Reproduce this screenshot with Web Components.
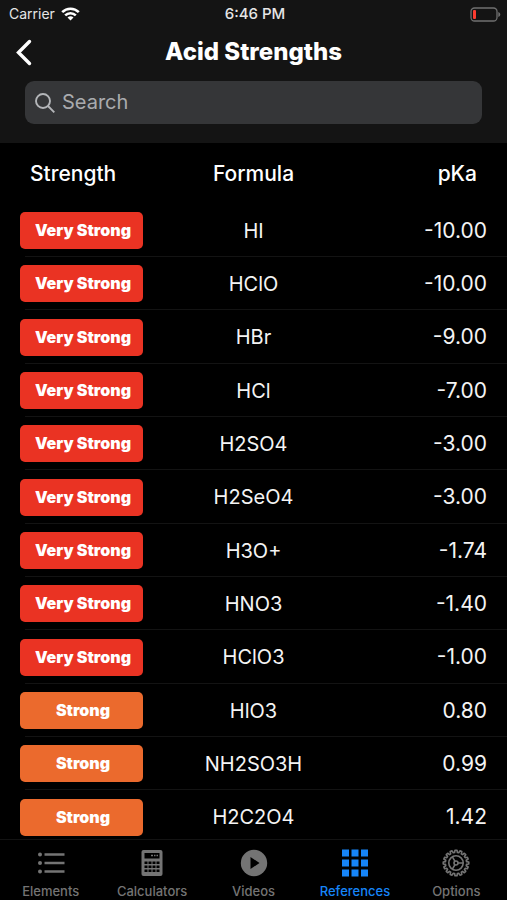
<!DOCTYPE html>
<html lang="en">
<head>
<meta charset="utf-8">
<meta name="viewport" content="width=device-width, initial-scale=1">
<title>Acid Strengths</title>
<style>
  html, body { height: 100%; }
  body {
    margin: 0;
    background: #000;
    color: #fff;
    font-family: Inter, "Liberation Sans", sans-serif;
  }
</style>
</head>
<body>
<acid-app></acid-app>

<script>
const define = (name, html, setup) => {
  const template = document.createElement('template');
  template.innerHTML = html;
  customElements.define(name, class extends HTMLElement {
    constructor() {
      super();
      this.attachShadow({ mode: 'open' }).append(template.content.cloneNode(true));
    }
    connectedCallback() {
      if (setup) setup(this, this.shadowRoot);
    }
  });
};

define('status-bar', `
  <style>
    :host { display: grid; grid-template-columns: 1fr auto 1fr; align-items: center; height: 28px; padding: 0 6px 0 9px; color: #e6e6e6; font-size: 14px; line-height: 20px; }
    .left { display: flex; align-items: center; gap: 6px; }
    .time { font-size: 15px; font-weight: 500; }
    .battery { justify-self: end; }
    svg { display: block; }
  </style>
  <div class="left"><span>Carrier</span>
    <svg width="19" height="14" viewBox="0 0 19 14" fill="none" stroke="#fff" stroke-width="2.6" aria-label="Wi-Fi">
      <path d="M1.2 5.2a11.8 11.8 0 0 1 16.6 0M4.2 8.4a7.5 7.5 0 0 1 10.6 0"/>
      <path d="M9.5 13.6 6.5 10.6a4.3 4.3 0 0 1 6 0z" fill="#fff" stroke="none"/>
    </svg>
  </div>
  <span class="time">6:46 PM</span>
  <svg class="battery" width="31" height="15" viewBox="0 0 31 15" aria-label="Battery low">
    <rect x="1" y="1" width="26" height="13" rx="3.5" fill="none" stroke="#707070" stroke-width="1.3"/>
    <rect x="3" y="3" width="3" height="9" rx="1" fill="#fb3b30"/>
    <path d="M28.3 5v5c1.2-.4 2-1.3 2-2.5s-.8-2.1-2-2.5z" fill="#707070"/>
  </svg>
`);

define('nav-bar', `
  <style>
    :host { display: grid; grid-template-columns: 48px 1fr 48px; align-items: center; height: 48px; }
    button { display: grid; place-items: center; width: 48px; height: 48px; padding: 0; border: 0; background: none; }
    h1 { margin: 0; text-align: center; font-size: 24px; line-height: 32px; font-weight: 800; }
  </style>
  <button type="button" aria-label="Back">
    <svg width="18" height="28" viewBox="0 0 18 28" fill="none" stroke="#fff" stroke-width="3.4" stroke-linecap="round"><path d="M14.5 3.5 3.5 14.5l11 11"/></svg>
  </button>
  <h1><slot></slot></h1>
`);

define('search-field', `
  <style>
    :host { display: block; padding: 5px 25px 19px; }
    label { display: flex; align-items: center; gap: 7px; height: 43px; padding: 0 10px; border-radius: 9px; background: #353638; }
    input { flex: 1; min-width: 0; height: 32px; padding: 0 0 2px; border: 0; outline: 0; background: none; color: #fff; font: inherit; font-size: 20px; appearance: none; }
    input::placeholder { color: #a9abae; opacity: 1; }
    svg { display: block; flex: none; }
  </style>
  <label>
    <svg width="20" height="20" viewBox="0 0 20 20" fill="none" stroke="#b4b6b9" stroke-width="1.9" aria-hidden="true"><circle cx="8" cy="8" r="7"/><path d="m13 13 6.3 6.3"/></svg>
    <input type="search" placeholder="Search" aria-label="Search">
  </label>
`);

define('strength-badge', `
  <style>
    :host { display: block; box-sizing: border-box; width: 123px; height: 37px; padding-left: 3px; border-radius: 5px; background: #ea3323; color: #fff; text-align: center; font-size: 16px; line-height: 37px; font-weight: 900; white-space: nowrap; }
    :host([level="strong"]) { background: #eb6a2d; }
  </style>
  <slot></slot>
`);

const acids = [
  ['Very Strong', 'HI', '-10.00'],
  ['Very Strong', 'HClO', '-10.00'],
  ['Very Strong', 'HBr', '-9.00'],
  ['Very Strong', 'HCl', '-7.00'],
  ['Very Strong', 'H2SO4', '-3.00'],
  ['Very Strong', 'H2SeO4', '-3.00'],
  ['Very Strong', 'H3O+', '-1.74'],
  ['Very Strong', 'HNO3', '-1.40'],
  ['Very Strong', 'HClO3', '-1.00'],
  ['Strong', 'HlO3', '0.80'],
  ['Strong', 'NH2SO3H', '0.99'],
  ['Strong', 'H2C2O4', '1.42']
];

define('acid-table', `
  <style>
    :host { display: block; overflow-y: auto; scrollbar-width: none; }
    table { width: 100%; table-layout: fixed; border-collapse: collapse; font-size: 21px; line-height: 28px; }
    th, td { padding: 0; font-weight: 500; }
    td { font-weight: 400; color: #f4f4f4; }
    td.formula { font-size: 20px; }
    thead tr { height: 61px; }
    tbody tr { height: 53px; background: linear-gradient(#131313, #131313) 25px 100% / 100% 1px no-repeat; }
    tbody tr:nth-child(3n) { height: 54px; }
    .strength { width: 30%; text-align: left; padding-left: 20px; box-sizing: border-box; }
    th.strength { padding-left: 30px; }
    .formula { text-align: center; }
    .pka { width: 30%; text-align: right; padding-right: 20px; box-sizing: border-box; }
    th.pka { padding-right: 30px; }
  </style>
  <table>
    <thead><tr><th class="strength" scope="col">Strength</th><th class="formula" scope="col">Formula</th><th class="pka" scope="col">pKa</th></tr></thead>
    <tbody></tbody>
  </table>
`, (host, root) => {
  root.querySelector('tbody').innerHTML = acids.map(([strength, formula, pka]) => `
    <tr><td class="strength"><strength-badge level="${strength.toLowerCase().replace(' ', '-')}">${strength}</strength-badge></td><td class="formula">${formula}</td><td class="pka">${pka}</td></tr>`).join('');
});

define('tab-item', `
  <style>
    :host { display: block; flex: 1; color: #747474; }
    :host([active]) { color: #1685f8; }
    a { display: flex; flex-direction: column; align-items: center; gap: 5px; padding-top: 9px; color: inherit; text-decoration: none; font-size: 13px; line-height: 18px; font-weight: 500; }
    ::slotted(svg) { display: block; width: 28px; height: 28px; }
  </style>
  <a href="#"><slot name="icon"></slot><slot></slot></a>
`);

define('tab-bar', `
  <style>
    :host { display: flex; flex: none; box-sizing: border-box; height: 61px; border-top: 1px solid #131313; background: #000; }
  </style>
  <slot></slot>
`);

/* Gear outline: teeth around a rim, traced point by point. */
const gearPath = (teeth, outer, inner) => {
  const points = [];
  for (let i = 0; i < teeth; i++) {
    [[-0.34, inner], [-0.2, outer], [0.2, outer], [0.34, inner]].forEach(([shift, radius]) => {
      const angle = (i + shift) / teeth * Math.PI * 2 - Math.PI / 2;
      points.push((14 + radius * Math.cos(angle)).toFixed(2) + ' ' + (14 + radius * Math.sin(angle)).toFixed(2));
    });
  }
  return 'M' + points.join('L') + 'Z';
};

define('acid-app', `
  <style>
    :host { display: flex; flex-direction: column; height: 100vh; background: #000; }
    header { flex: none; background: #141414; }
    acid-table { flex: 1; min-height: 0; }
  </style>
  <header>
    <status-bar></status-bar>
    <nav-bar>Acid Strengths</nav-bar>
    <search-field></search-field>
  </header>
  <acid-table></acid-table>
  <tab-bar>
    <tab-item>
      <svg slot="icon" viewBox="0 0 28 28" fill="currentColor"><circle cx="3" cy="5.5" r="2"/><circle cx="3" cy="14" r="2"/><circle cx="3" cy="22.5" r="2"/><path d="M7.5 4.2h20v2.6h-20zM7.5 12.7h20v2.6h-20zM7.5 21.2h20v2.6h-20z"/></svg>
      Elements
    </tab-item>
    <tab-item>
      <svg slot="icon" viewBox="0 0 28 28"><rect x="3.5" y="1" width="21" height="26" rx="2" fill="currentColor"/><path d="M6.5 4h15v5.5h-15z" fill="#000"/><path d="M13 6.5h2m1 0h1.500m1 0h1.500" stroke="currentColor" stroke-width="1.5"/><path d="M6.5 12.5h3v2.500h-3zm4 0h3v2.500h-3zm4 0h3v2.500h-3zm4 0h3v2.500h-3zM6.500 16.500h3v2.500h-3zm4 0h3v2.500h-3zm4 0h3v2.500h-3zm4 0h3v2.500h-3zM6.500 20.500h3v2.500h-3zm4 0h3v2.500h-3zm4 0h3v2.500h-3zm4 0h3v2.500h-3z" fill="#000"/></svg>
      Calculators
    </tab-item>
    <tab-item>
      <svg slot="icon" viewBox="0 0 28 28"><circle cx="14" cy="14" r="13.2" fill="currentColor"/><path d="M10.5 8v12l9-6z" fill="#000"/></svg>
      Videos
    </tab-item>
    <tab-item active>
      <svg slot="icon" viewBox="0 0 28 28" fill="currentColor"><path d="M1 .5h7v7H1zM10.500 .5h7v7h-7zM20 .5h7v7h-7zM1 10.500h7v7H1zM10.500 10.500h7v7h-7zM20 10.500h7v7h-7zM1 20.500h7v7H1zM10.500 20.500h7v7h-7zM20 20.500h7v7h-7z"/></svg>
      References
    </tab-item>
    <tab-item>
      <svg slot="icon" viewBox="0 0 28 28" fill="none" stroke="currentColor" stroke-width="1.6" stroke-linejoin="round"><path d="${gearPath(16, 12.8, 10.6)}"/><circle cx="14" cy="14" r="7.2"/><circle cx="14" cy="14" r="2"/><path d="M16 14h5.200M13 12.300l-2.600-4.500M13 15.700l-2.600 4.500"/></svg>
      Options
    </tab-item>
  </tab-bar>
`);
</script>
</body>
</html>
